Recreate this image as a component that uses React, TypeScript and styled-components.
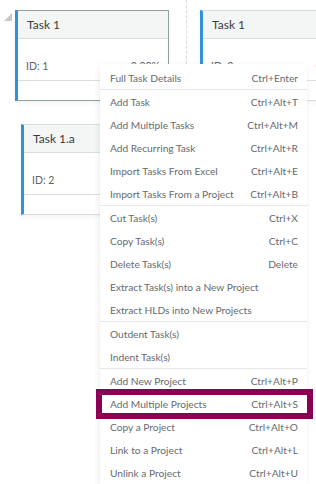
import styled, { createGlobalStyle } from 'styled-components';

const GlobalStyle = createGlobalStyle`
  html, body {
    margin: 0;
    padding: 0;
    background: #ffffff;
  }
  body {
    font-family: Lato, 'Open Sans', sans-serif;
  }
`;

type CardType = {
  id: number;
  title: string;
  x: number;
  y: number;
  selected?: boolean;
};

type MenuItemType = {
  label: string;
  shortcut?: string;
  divider?: boolean;
  marked?: boolean;
};

const cards: CardType[] = [
  { id: 1, title: 'Task 1', x: 15, y: 10, selected: true },
  { id: 3, title: 'Task 1', x: 200, y: 10 },
  { id: 2, title: 'Task 1.a', x: 21, y: 124 },
];

const menu: MenuItemType[] = [
  { label: 'Full Task Details', shortcut: 'Ctrl+Enter', divider: true },
  { label: 'Add Task', shortcut: 'Ctrl+Alt+T' },
  { label: 'Add Multiple Tasks', shortcut: 'Ctrl+Alt+M' },
  { label: 'Add Recurring Task', shortcut: 'Ctrl+Alt+R' },
  { label: 'Import Tasks From Excel', shortcut: 'Ctrl+Alt+E' },
  { label: 'Import Tasks From a Project', shortcut: 'Ctrl+Alt+B', divider: true },
  { label: 'Cut Task(s)', shortcut: 'Ctrl+X' },
  { label: 'Copy Task(s)', shortcut: 'Ctrl+C' },
  { label: 'Delete Task(s)', shortcut: 'Delete' },
  { label: 'Extract Task(s) into a New Project' },
  { label: 'Extract HLDs into New Projects', divider: true },
  { label: 'Outdent Task(s)' },
  { label: 'Indent Task(s)', divider: true },
  { label: 'Add New Project', shortcut: 'Ctrl+Alt+P' },
  { label: 'Add Multiple Projects', shortcut: 'Ctrl+Alt+S', marked: true },
  { label: 'Copy a Project', shortcut: 'Ctrl+Alt+O' },
  { label: 'Link to a Project', shortcut: 'Ctrl+Alt+L' },
  { label: 'Unlink a Project', shortcut: 'Ctrl+Alt+U' },
];

const TaskCard = ({ card }: { card: CardType }) => (
  <Card $selected={card.selected} style={{ left: card.x, top: card.y }}>
    <CardHeader>{card.title}</CardHeader>
    <CardBody>
      <span>ID: {card.id}</span>
      <span>0.00%</span>
    </CardBody>
    <CardFooter />
  </Card>
);

const App = () => (
  <>
    <GlobalStyle />
    <Board>
      <Collapse viewBox="0 0 10 10" width="10" height="10">
        <polygon points="9,1 9,9 1,9" fill="#c8c8c8" />
      </Collapse>
      <DashLine />
      {cards.map((c) => (
        <TaskCard key={c.id} card={c} />
      ))}
      <Menu>
        {menu.map((m) => (
          <Item key={m.label} $divider={m.divider}>
            <Label>{m.label}</Label>
            {m.shortcut && <Shortcut>{m.shortcut}</Shortcut>}
            {m.marked && <Mark />}
          </Item>
        ))}
      </Menu>
    </Board>
  </>
);

const Board = styled.div`
  position: relative;
  width: 316px;
  height: 484px;
  overflow: hidden;
  background: #ffffff;
`;

const Collapse = styled.svg`
  position: absolute;
  left: 3px;
  top: 12px;
`;

const DashLine = styled.div`
  position: absolute;
  left: 186px;
  top: 0;
  height: 120px;
  border-left: 1px dashed #dadada;
`;

const Card = styled.div<{ $selected?: boolean }>`
  position: absolute;
  width: 150px;
  height: 89px;
  background: #ffffff;
  border: 1px solid ${(p) => (p.$selected ? '#8fa09f' : '#dadddd')};
  border-left: 3px solid #2f93dc;
  box-shadow: 0 2px 4px rgba(0, 0, 0, 0.05);
  display: flex;
  flex-direction: column;
`;

const CardHeader = styled.div`
  height: 27px;
  display: flex;
  align-items: center;
  padding: 0 9px;
  background: #f4f5f5;
  border-bottom: 1px solid #dcdede;
  font-size: 12px;
  color: #3a3a3a;
`;

const CardBody = styled.div`
  height: 42px;
  display: flex;
  align-items: flex-end;
  justify-content: space-between;
  padding: 0 8px 8px 8px;
  box-sizing: border-box;
  font-size: 10.5px;
  color: #5f6368;
  border-bottom: 1px solid #dcdede;
`;

const CardFooter = styled.div`
  flex: 1;
`;

const Menu = styled.div`
  position: absolute;
  left: 100px;
  top: 64px;
  width: 207px;
  padding-top: 2px;
  background: #ffffff;
  box-shadow: -1px 2px 6px rgba(0, 0, 0, 0.08);
`;

const Item = styled.div<{ $divider?: boolean }>`
  position: relative;
  height: 23px;
  display: flex;
  align-items: center;
  justify-content: space-between;
  padding: 0 9px 0 10px;
  font-size: 10.2px;
  color: #666b70;
  border-bottom: ${(p) => (p.$divider ? '1px solid #e6e8e9' : 'none')};
`;

const Label = styled.span`
  white-space: nowrap;
`;

const Shortcut = styled.span`
  white-space: nowrap;
`;

const Mark = styled.div`
  position: absolute;
  left: -4px;
  right: -6px;
  top: -3px;
  bottom: -4px;
  border: 6px solid #8b0052;
  box-sizing: border-box;
  pointer-events: none;
`;

export default App;
